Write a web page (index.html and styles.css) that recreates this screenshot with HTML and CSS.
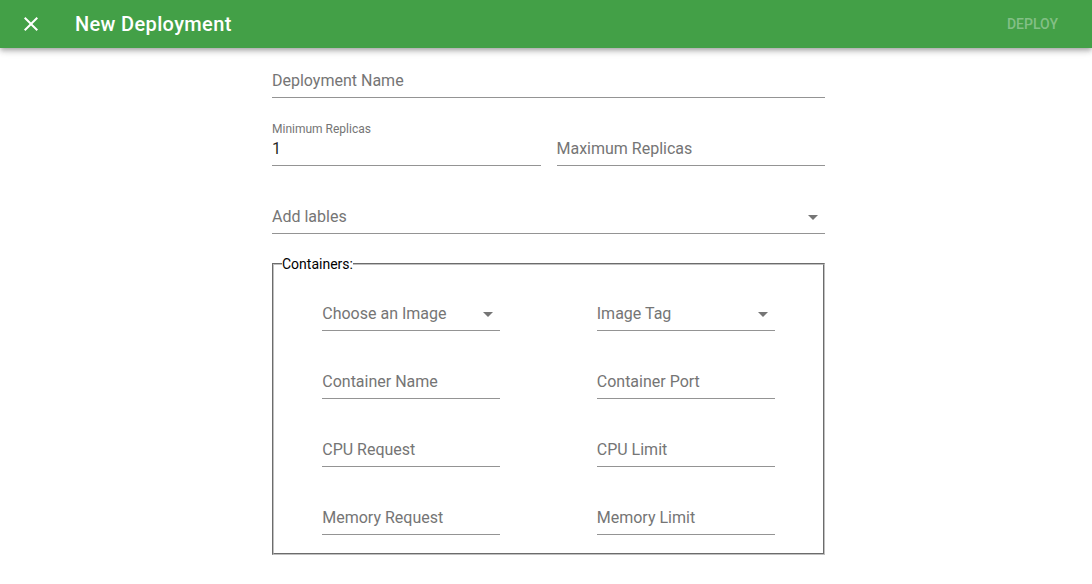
FILE: index.html
```html
<!DOCTYPE html>
<html lang="en">
<head>
    <meta charset="UTF-8">
    <meta name="viewport" content="width=device-width, initial-scale=1.0">
    <title>New Deployment</title>
    <link rel="stylesheet" href="styles.css">
</head>
<body>
    <header class="app-bar">
        <button class="close-btn" aria-label="Close">
            <svg viewBox="0 0 24 24" width="24" height="24"><path d="M19 6.41L17.59 5 12 10.59 6.41 5 5 6.41 10.59 12 5 17.59 6.41 19 12 13.41 17.59 19 19 17.59 13.41 12z"/></svg>
        </button>
        <h1 class="app-title">New Deployment</h1>
        <button class="deploy-btn" disabled>Deploy</button>
    </header>

    <main class="form">
        <div class="field">
            <input type="text" placeholder="Deployment Name">
        </div>

        <div class="field-row">
            <div class="field">
                <label class="field-label">Minimum Replicas</label>
                <input type="text" value="1">
            </div>
            <div class="field">
                <input type="text" placeholder="Maximum Replicas">
            </div>
        </div>

        <div class="field">
            <div class="select">
                <span>Add lables</span>
                <svg viewBox="0 0 24 24" width="24" height="24"><path d="M7 10l5 5 5-5z"/></svg>
            </div>
        </div>

        <fieldset class="containers">
            <legend>Containers:</legend>
            <div class="container-grid">
                <div class="field small">
                    <div class="select">
                        <span>Choose an Image</span>
                        <svg viewBox="0 0 24 24" width="24" height="24"><path d="M7 10l5 5 5-5z"/></svg>
                    </div>
                </div>
                <div class="field small">
                    <div class="select">
                        <span>Image Tag</span>
                        <svg viewBox="0 0 24 24" width="24" height="24"><path d="M7 10l5 5 5-5z"/></svg>
                    </div>
                </div>
                <div class="field small"><input type="text" placeholder="Container Name"></div>
                <div class="field small"><input type="text" placeholder="Container Port"></div>
                <div class="field small"><input type="text" placeholder="CPU Request"></div>
                <div class="field small"><input type="text" placeholder="CPU Limit"></div>
                <div class="field small"><input type="text" placeholder="Memory Request"></div>
                <div class="field small"><input type="text" placeholder="Memory Limit"></div>
            </div>
        </fieldset>
    </main>
</body>
</html>
```

FILE: styles.css
```css
body {
    margin: 0;
    font-family: Roboto, "Liberation Sans", sans-serif;
    background: #fff;
}

/* top bar */
.app-bar {
    display: flex;
    align-items: center;
    height: 48px;
    padding: 0 18px 0 19px;
    background: #43a047;
    color: #fff;
    box-shadow: 0 2px 4px -1px rgba(0,0,0,0.2), 0 4px 5px 0 rgba(0,0,0,0.14), 0 1px 10px 0 rgba(0,0,0,0.12);
}

.close-btn {
    display: flex;
    padding: 0;
    border: none;
    background: none;
    cursor: pointer;
}

.close-btn svg {
    fill: #fff;
}

.app-title {
    flex: 1;
    margin: 0 0 0 32px;
    font-size: 20px;
    font-weight: 500;
    letter-spacing: 0.35px;
    line-height: 48px;
}

.deploy-btn {
    padding: 8px 16px;
    border: none;
    background: none;
    font-family: inherit;
    font-size: 14px;
    font-weight: 500;
    text-transform: uppercase;
    color: rgba(255,255,255,0.35);
}

/* form */
.form {
    box-sizing: border-box;
    width: 558px;
    margin: 0 auto;
    padding: 1px 0 0 5px;
}

.field {
    position: relative;
    padding: 20px 0 4px;
    border-bottom: 1px solid rgba(0,0,0,0.42);
    margin-bottom: 19px;
}

.field-label {
    display: block;
    box-sizing: border-box;
    height: 20px;
    margin-top: -20px;
    padding-top: 4px;
    font-size: 12px;
    line-height: 16px;
    color: #757575;
}

.field input {
    display: block;
    box-sizing: border-box;
    width: 100%;
    height: 24px;
    padding: 0 0 2px;
    border: none;
    outline: none;
    background: transparent;
    font-family: inherit;
    font-size: 16px;
    color: rgba(0,0,0,0.87);
}

.field input::placeholder {
    color: #757575;
    opacity: 1;
}

.select {
    display: flex;
    align-items: center;
    justify-content: space-between;
    height: 24px;
    font-size: 16px;
    line-height: 24px;
    color: #757575;
}

.select svg {
    fill: #757575;
}

.field-row {
    display: flex;
    gap: 16px;
}

.field-row .field {
    flex: 1;
}

/* containers box */
.containers {
    margin: 22px 0 0;
    padding: 10px 0 18px;
    border: 2px groove #c0c0c0;
    min-width: 0;
}

.containers legend {
    margin-left: 8px;
    padding: 0;
    font-size: 14px;
    line-height: 16px;
    color: #000;
}

.container-grid {
    display: grid;
    grid-template-columns: 1fr 1fr;
    row-gap: 19px;
    justify-items: center;
}

.field.small {
    width: 178px;
    margin-bottom: 0;
}
```
